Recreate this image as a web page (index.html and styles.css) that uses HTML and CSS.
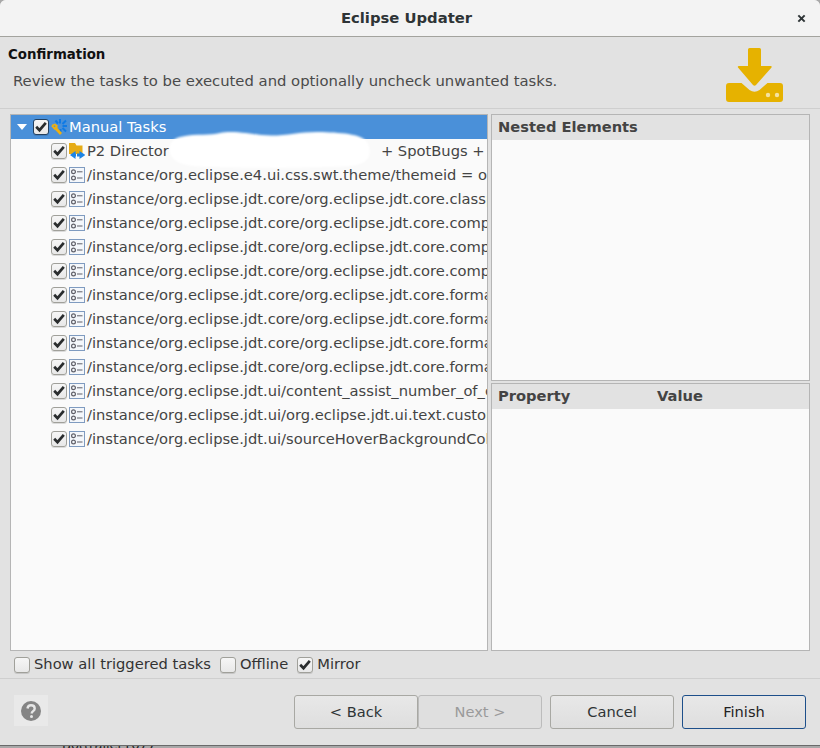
FILE: index.html
```html
<!DOCTYPE html>
<html lang="en">
<head>
<meta charset="utf-8">
<title>Eclipse Updater</title>
<link rel="stylesheet" href="styles.css">
</head>
<body>
<svg class="defs" width="0" height="0" aria-hidden="true">
  <symbol id="check" viewBox="0 0 14 14">
    <path d="M2.200 6.800 5.500 10.200 11.800 2.800" fill="none" stroke="#2a2d2e" stroke-width="2.700"/>
  </symbol>
  <symbol id="pref" viewBox="0 0 16 16">
    <rect x=".5" y=".5" width="15" height="15" fill="#f4f7fb" stroke="#7f9bc0"/>
    <circle cx="4.500" cy="4.800" r="1.900" fill="none" stroke="#5f5f68" stroke-width="1.200"/>
    <circle cx="4.500" cy="11" r="1.900" fill="none" stroke="#5f5f68" stroke-width="1.200"/>
    <path d="M8 4.800h5.500M8 11h5.500" stroke="#5f5f68" fill="none"/>
  </symbol>
</svg>
<div class="dialog">
  <header class="titlebar">
    <span class="title">Eclipse Updater</span>
    <svg class="close" viewBox="0 0 10 10"><path d="M1.500 1.500l7 7M8.500 1.500l-7 7" stroke="#2e3436" stroke-width="2.200" fill="none"/></svg>
  </header>
  <section class="banner">
    <div class="banner-text">
      <h1>Confirmation</h1>
      <p>Review the tasks to be executed and optionally uncheck unwanted tasks.</p>
    </div>
    <svg class="banner-icon" viewBox="0 0 58 54">
      <path d="M22 1.500Q22 0 23.500 0h10Q35 0 35 1.500V18h9.500q2 0 .8 1.700L30 37q-1.500 1.500-3 0L12.200 19.700q-1.200-1.700.8-1.700H22z" fill="#e6b200"/>
      <path d="M3 35h12.500l8 7q5 3.500 10 0l8-7H54q3 0 3 3v13q0 3-3 3H3q-3 0-3-3V38q0-3 3-3z" fill="#e6b200"/>
      <circle cx="42" cy="47" r="2.200" fill="#f4e2a0"/>
      <circle cx="51" cy="47" r="2.200" fill="#f4e2a0"/>
    </svg>
  </section>
  <main class="panes">
    <div class="tree">
      <div class="row selected">
        <span class="twisty"></span>
        <span class="box focus"><svg><use href="#check"/></svg></span>
        <svg class="icon" viewBox="0 0 16 16">
          <path d="M9 0v4.500M16 7h-4.500M15 1.500 11.500 5M15 12.500 11.500 9M4.500 1.500 7 4.500M9.500 10v3" stroke="#0f7ae5" stroke-width="2" fill="none"/>
          <path d="M3.500 8 10 15" stroke="#eeb011" stroke-width="2.800" fill="none"/>
          <path d="M.8 6.500 3.500 9.500 6.500 7.500M1.200 6.500 4 5.500 6.500 7.500" stroke="#eeb011" stroke-width="1.800" fill="none"/>
        </svg>
        <span class="label">Manual Tasks</span>
      </div>
      <div class="row child">
        <span class="box"><svg><use href="#check"/></svg></span>
        <svg class="icon" viewBox="0 0 16 16">
          <path d="M0 0h6l1.500 2.500H13.500V11H0z" fill="#e6ac17"/>
          <path d="M1 12 6.500 8v2.500H7v3H6.500V16zM8 10.500h2.500V8L16.500 12 10.500 16v-2.500H8z" fill="#1c84e6"/>
        </svg>
        <span class="label">P2 Director</span>
        <span class="label tail">+ SpotBugs +</span>
      </div>
      <div class="row child"><span class="box"><svg><use href="#check"/></svg></span><svg class="icon"><use href="#pref"/></svg><span class="label">/instance/org.eclipse.e4.ui.css.swt.theme/themeid = org.eclipse.e4.ui.css.theme.e4_dark</span></div>
      <div class="row child"><span class="box"><svg><use href="#check"/></svg></span><svg class="icon"><use href="#pref"/></svg><span class="label">/instance/org.eclipse.jdt.core/org.eclipse.jdt.core.classpath.exclusionPatterns</span></div>
      <div class="row child"><span class="box"><svg><use href="#check"/></svg></span><svg class="icon"><use href="#pref"/></svg><span class="label">/instance/org.eclipse.jdt.core/org.eclipse.jdt.core.compiler.codegen</span></div>
      <div class="row child"><span class="box"><svg><use href="#check"/></svg></span><svg class="icon"><use href="#pref"/></svg><span class="label">/instance/org.eclipse.jdt.core/org.eclipse.jdt.core.compiler.compliance</span></div>
      <div class="row child"><span class="box"><svg><use href="#check"/></svg></span><svg class="icon"><use href="#pref"/></svg><span class="label">/instance/org.eclipse.jdt.core/org.eclipse.jdt.core.compiler.source</span></div>
      <div class="row child"><span class="box"><svg><use href="#check"/></svg></span><svg class="icon"><use href="#pref"/></svg><span class="label">/instance/org.eclipse.jdt.core/org.eclipse.jdt.core.formatter.alignment</span></div>
      <div class="row child"><span class="box"><svg><use href="#check"/></svg></span><svg class="icon"><use href="#pref"/></svg><span class="label">/instance/org.eclipse.jdt.core/org.eclipse.jdt.core.formatter.blank_lines</span></div>
      <div class="row child"><span class="box"><svg><use href="#check"/></svg></span><svg class="icon"><use href="#pref"/></svg><span class="label">/instance/org.eclipse.jdt.core/org.eclipse.jdt.core.formatter.comment</span></div>
      <div class="row child"><span class="box"><svg><use href="#check"/></svg></span><svg class="icon"><use href="#pref"/></svg><span class="label">/instance/org.eclipse.jdt.core/org.eclipse.jdt.core.formatter.lineSplit</span></div>
      <div class="row child"><span class="box"><svg><use href="#check"/></svg></span><svg class="icon"><use href="#pref"/></svg><span class="label">/instance/org.eclipse.jdt.ui/content_assist_number_of_computers</span></div>
      <div class="row child"><span class="box"><svg><use href="#check"/></svg></span><svg class="icon"><use href="#pref"/></svg><span class="label">/instance/org.eclipse.jdt.ui/org.eclipse.jdt.ui.text.custom_code_templates</span></div>
      <div class="row child"><span class="box"><svg><use href="#check"/></svg></span><svg class="icon"><use href="#pref"/></svg><span class="label">/instance/org.eclipse.jdt.ui/sourceHoverBackgroundColor</span></div>
      <svg class="redaction" viewBox="0 0 230 46">
        <path d="M22 10C40 6 52 9 62 6c12-3 30 1 42 2 22 2 38-4 60-3 22 1 42 2 46 12 4 10 2 20-18 22-40 2-90 2-130 1-30 0-46-2-50-14C10 18 14 12 22 10z" fill="#fff"/>
      </svg>
    </div>
    <div class="details">
      <div class="table nested">
        <div class="table-head"><span>Nested Elements</span></div>
      </div>
      <div class="table props">
        <div class="table-head"><span class="col-prop">Property</span><span>Value</span></div>
      </div>
    </div>
  </main>
  <div class="options">
    <label class="opt"><span class="box"></span>Show all triggered tasks</label>
    <label class="opt"><span class="box"></span>Offline</label>
    <label class="opt"><span class="box"><svg><use href="#check"/></svg></span>Mirror</label>
  </div>
  <footer class="actions">
    <button class="help" aria-label="Help">
      <svg viewBox="0 0 20 20"><circle cx="10" cy="10" r="10" fill="#848484"/><path d="M6.500 7.500C6.800 5 8.500 4.300 10 4.300c2.300 0 3.700 1.400 3.700 3.100 0 2.800-3 2.600-3 5" fill="none" stroke="#e6e6e6" stroke-width="2.400"/><circle cx="10.500" cy="15.500" r="1.500" fill="#e6e6e6"/></svg>
    </button>
    <div class="buttons">
      <div class="pair">
        <button class="btn">&lt; Back</button>
        <button class="btn" disabled>Next &gt;</button>
      </div>
      <button class="btn">Cancel</button>
      <button class="btn default">Finish</button>
    </div>
  </footer>
</div>
<div class="behind">Bottrailer1677</div>
</body>
</html>
```
FILE: styles.css
```css
* { box-sizing: border-box; }
html, body { margin: 0; height: 748px; overflow: hidden; }
body { background: #a8a8a8; font: 14.8px/1 "DejaVu Sans", sans-serif; color: #2e3436; position: relative; }
.defs { position: absolute; }
.dialog { height: 745px; background: #e2e2e2; display: flex; flex-direction: column; border-radius: 6px 6px 0 0; box-shadow: 0 1px 0 #6a6a6a; position: relative; z-index: 1; }
.titlebar { height: 37px; flex: none; background: #f3f3f3; border-bottom: 1px solid #a3a39e; display: flex; align-items: center; justify-content: center; padding-right: 7px; position: relative; border-radius: 6px 6px 0 0; }
.title { font-weight: bold; font-size: 14.8px; color: #2e3436; }
.close { position: absolute; right: 14px; top: 14px; width: 9px; height: 9px; }
.banner { height: 72px; flex: none; display: flex; justify-content: space-between; border-bottom: 1px solid #cfcfcf; padding: 0 36px 0 8px; }
.banner h1 { margin: 10px 0 0; font-size: 13.33px; line-height: 15px; font-weight: bold; color: #111; }
.banner p { margin: 11px 0 0 5px; line-height: 15px; color: #4a4a4a; }
.banner-icon { width: 58px; height: 54px; margin-top: 11px; }
.panes { flex: none; height: 537px; margin: 5px 10px 0; display: flex; gap: 3px; }
.tree { width: 478px; flex: none; background: #fafafa; border: 1px solid #b5b5b5; font-size: 14.7px; overflow: hidden; position: relative; }
.row { height: 24px; display: flex; align-items: center; white-space: nowrap; color: #444; }
.row.selected { background: #4a90d9; color: #fff; padding-left: 22px; }
.row.child { padding-left: 40px; }
.twisty { position: absolute; left: 6px; top: 9px; border: 5px solid transparent; border-top: 6px solid #fff; border-bottom: 0; }
.box { width: 16px; height: 16px; flex: none; display: inline-block; border: 1px solid #a0a09a; border-radius: 3px; background: linear-gradient(#f6f6f6, #e8e8e8); box-shadow: 0 1px 0 rgba(0,0,0,.12); }
.box svg { display: block; width: 14px; height: 14px; }
.box.focus { border-color: #24405f; }
.icon { width: 16px; height: 16px; flex: none; margin-left: 2px; }
.label { margin-left: 2px; }
.tail { margin-left: 212px; }
.redaction { position: absolute; left: 147px; top: 12px; width: 230px; height: 46px; filter: blur(1.2px); }
.details { flex: 1; display: flex; flex-direction: column; gap: 2px; }
.table { background: #fafafa; border: 1px solid #b5b5b5; }
.nested { flex: none; height: 267px; }
.props { flex: 1; }
.table-head { height: 25px; background: #e2e2e2; display: flex; align-items: center; padding-left: 6px; font-size: 14.67px; font-weight: bold; color: #444; }
.col-prop { width: 159px; }
.options { flex: none; height: 28px; display: flex; align-items: center; padding-left: 14px; gap: 9px; border-bottom: 1px solid #cfcfcf; font-size: 14.7px; color: #333; }
.opt { display: flex; align-items: center; gap: 4px; }
.actions { flex: 1; display: flex; justify-content: space-between; padding: 16px 14px 0 14px; align-items: flex-start; }
.help { width: 34px; height: 31px; border: 0; padding: 0; background: #e9e9e9; display: flex; align-items: center; justify-content: center; }
.help svg { width: 20px; height: 20px; }
.buttons { display: flex; gap: 8px; }
.pair { display: flex; }
.btn { width: 124px; height: 34px; font: 14.6px "DejaVu Sans", sans-serif; color: #2e3436; background: linear-gradient(#e8e8e8, #dedede); border: 1px solid #a8a8a3; border-radius: 3px; padding: 0 0 2px; }
.btn:disabled { color: #9a9a9a; background: #dfdfdf; border-color: #bcbcbc; }
.btn.default { border-color: #1d4f8a; color: #1f2224; }
.behind { position: absolute; left: 62px; top: 738px; font-size: 13px; color: #222; }
```
